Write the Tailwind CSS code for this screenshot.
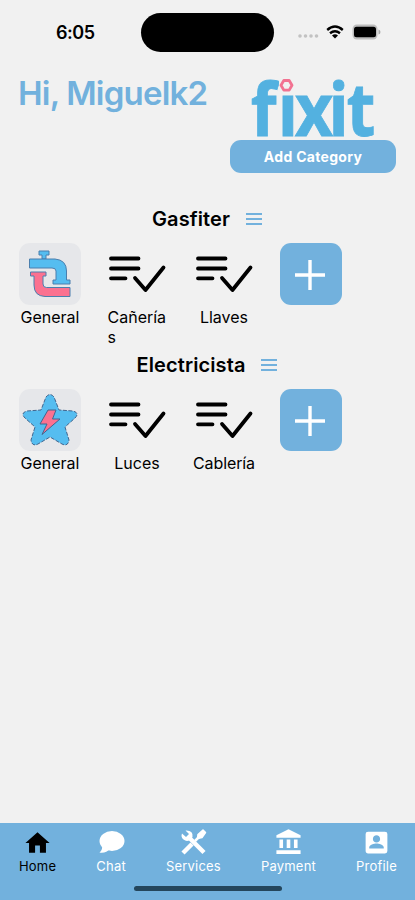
<!DOCTYPE html>
<html lang="es">
<head>
    <meta charset="UTF-8">
    <meta name="viewport" content="width=device-width, initial-scale=1.0">
    <title>Fixit</title>
    <script src="https://cdn.jsdelivr.net/npm/@tailwindcss/browser@4"></script>
</head>
<body class="bg-[#f1f1f1] font-['Inter','Liberation_Sans',sans-serif] text-black">

    <!-- Shared icons -->
    <svg class="hidden">
        <symbol id="checklist" viewBox="0 0 60 40">
            <g fill="none" stroke="#000" stroke-width="3.8" stroke-linecap="round" stroke-linejoin="round">
                <path d="M4 4.500H31.500M4 14.500H31.500M4 24.300H18.500"/>
                <path d="M28 24 38.500 36 56.500 13.500"/>
            </g>
        </symbol>
        <symbol id="menu" viewBox="0 0 18 14">
            <path d="M1 2H17M1 7H17M1 12H17" stroke="#72b1dd" stroke-width="2" fill="none"/>
        </symbol>
        <symbol id="plus" viewBox="0 0 32 32">
            <path d="M16 1V31M1 16H31" stroke="#fff" stroke-width="3.400" fill="none"/>
        </symbol>
    </svg>

    <div class="w-[415px] h-[900px] flex flex-col overflow-hidden">

        <!-- Status bar -->
        <div class="h-[64px] flex items-center shrink-0">
            <span class="w-[141px] pl-[56px] text-[18px] font-semibold tracking-[-0.5px]">6:05</span>
            <div class="w-[133px] h-[39px] rounded-full bg-black"></div>
            <div class="flex items-center pl-[23px]">
                <svg class="w-[22px] h-[6px] mt-[8px]" viewBox="0 0 22 6" fill="#c2c2c2">
                    <circle cx="3" cy="3" r="1.800"/><circle cx="8.500" cy="3" r="1.800"/><circle cx="14" cy="3" r="1.800"/><circle cx="19.500" cy="3" r="1.800"/>
                </svg>
                <svg class="w-[18px] h-[14px] ml-[7px] -mt-[1px]" viewBox="0 0 18 14" fill="none" stroke="#000" stroke-width="2.400">
                    <path d="M1.200 5Q9-1.800 16.800 5"/>
                    <path d="M4 8.300Q9 4.200 14 8.300"/>
                    <path d="M9 13.500 6 10.400Q9 8 12 10.400Z" fill="#000" stroke="none"/>
                </svg>
                <svg class="w-[29px] h-[16px] ml-[8px] -mt-[1px]" viewBox="0 0 29 16">
                    <rect x=".5" y=".5" width="25" height="15" rx="4.500" fill="#bdbdbd"/>
                    <rect x="2" y="2.700" width="22" height="10.500" rx="2.500" fill="#000"/>
                    <path d="M26.500 5.500Q28.500 6 28.500 8T26.500 10.500Z" fill="#aaa"/>
                </svg>
            </div>
        </div>

        <!-- Greeting and logo -->
        <div class="h-[136px] flex justify-between items-start pl-[18px] pr-[19px] shrink-0">
            <h1 class="pt-[9px] text-[33px] leading-[40px] font-semibold text-[#72b1dd] tracking-[-0.8px] whitespace-nowrap">Hi, Miguelk2</h1>
            <div class="w-[166px] flex flex-col items-center pt-[12px]">
                <svg class="w-[166px] h-[64px] overflow-visible" viewBox="0 0 166 64">
                    <text x="23 53 72 109.500 129.500" y="60" transform="scale(.9 1)" font-family="Open Sans" font-weight="700" font-size="74" fill="#53b1e0" stroke="#53b1e0" stroke-width=".8">fixit</text>
                    <rect x="49" y="0" width="17" height="18.500" fill="#f1f1f1"/>
                    <path d="M53.800 4.500H59.200L62 9.300 59.200 14.100H53.800L51 9.300Z" fill="none" stroke="#f27291" stroke-width="2.800" stroke-linejoin="round"/>
                </svg>
                <button class="w-[166px] h-[33px] rounded-[11px] bg-[#72b1dd] text-white text-[14px] font-bold tracking-[0.3px]">Add Category</button>
            </div>
        </div>

        <!-- Gasfiter -->
        <section class="h-[146px] shrink-0">
            <div class="h-[37px] flex items-center justify-center gap-[15px]">
                <h2 class="text-[20px] font-semibold tracking-[0.1px]">Gasfiter</h2>
                <svg class="w-[18px] h-[14px]"><use href="#menu"/></svg>
            </div>
            <div class="flex gap-[25px] pl-[19px] pt-[6px] text-[16px] leading-[20px]">
                <div class="w-[62px] flex flex-col items-center">
                    <div class="size-[62px] rounded-[11px] bg-[#e6e7ea] flex items-center justify-center">
                        <svg class="size-[62px]" viewBox="0 0 62 62" stroke="#4a7fae" stroke-width="1" stroke-linejoin="round">
                            <path d="M20 8H30V12H27V16H23V12H20Z" fill="#55bdf0"/>
                            <path d="M10.500 16H36Q47.500 17 47.500 28V37H51V41H34V37H37V28Q37 25 33 25H10.500Z" fill="#55bdf0"/>
                            <path d="M11.500 29H27V33H24V41Q24 44.500 27.500 44.500H51V53.500H26Q15 53 15 42V33H11.500Z" fill="#fb7190"/>
                        </svg>
                    </div>
                    <span class="mt-[2px]">General</span>
                </div>
                <div class="w-[62px] flex flex-col items-center">
                    <div class="size-[62px] flex items-center justify-center">
                        <svg class="w-[60px] h-[40px] shrink-0"><use href="#checklist"/></svg>
                    </div>
                    <span class="mt-[2px] w-[59px] break-all">Cañerías</span>
                </div>
                <div class="w-[62px] flex flex-col items-center">
                    <div class="size-[62px] flex items-center justify-center">
                        <svg class="w-[60px] h-[40px] shrink-0"><use href="#checklist"/></svg>
                    </div>
                    <span class="mt-[2px]">Llaves</span>
                </div>
                <button class="size-[62px] rounded-[11px] bg-[#72b1dd] flex items-center justify-center pr-[3px] pt-[2px]">
                    <svg class="size-[32px]"><use href="#plus"/></svg>
                </button>
            </div>
        </section>

        <!-- Electricista -->
        <section class="h-[146px] shrink-0">
            <div class="h-[37px] flex items-center justify-center gap-[15px]">
                <h2 class="text-[20px] font-semibold tracking-[0.1px]">Electricista</h2>
                <svg class="w-[18px] h-[14px]"><use href="#menu"/></svg>
            </div>
            <div class="flex gap-[25px] pl-[19px] pt-[6px] text-[16px] leading-[20px]">
                <div class="w-[62px] flex flex-col items-center">
                    <div class="size-[62px] rounded-[11px] bg-[#e6e7ea] flex items-center justify-center">
                        <svg class="size-[62px]" viewBox="0 0 62 62" stroke="#41658e" stroke-width="1" stroke-linejoin="round">
                            <path d="M27 8Q31 3 35 8L40 21 54 22Q61 24 56 29L46 38 50 51Q49 58 43 55L31 48 19 55Q13 58 12 51L16 38 6 29Q1 24 8 22L22 21Z" fill="#55bdf0" stroke-dasharray="4 1.500"/>
                            <path d="M29 21H37L33.500 30H41L23 45.500 28 35H21Z" fill="#fb7190"/>
                        </svg>
                    </div>
                    <span class="mt-[2px]">General</span>
                </div>
                <div class="w-[62px] flex flex-col items-center">
                    <div class="size-[62px] flex items-center justify-center">
                        <svg class="w-[60px] h-[40px] shrink-0"><use href="#checklist"/></svg>
                    </div>
                    <span class="mt-[2px]">Luces</span>
                </div>
                <div class="w-[62px] flex flex-col items-center">
                    <div class="size-[62px] flex items-center justify-center">
                        <svg class="w-[60px] h-[40px] shrink-0"><use href="#checklist"/></svg>
                    </div>
                    <span class="mt-[2px] tracking-[-0.1px]">Cablería</span>
                </div>
                <button class="size-[62px] rounded-[11px] bg-[#72b1dd] flex items-center justify-center pr-[3px] pt-[2px]">
                    <svg class="size-[32px]"><use href="#plus"/></svg>
                </button>
            </div>
        </section>

        <!-- Bottom navigation -->
        <nav class="mt-auto h-[77px] shrink-0 bg-[#72b1dd] text-white text-[13px] leading-[16px] tracking-[0.2px] flex flex-col">
            <div class="h-[63px] flex justify-between pl-[19px] pr-[18px] pt-[5px]">
                <a class="flex flex-col items-center text-black">
                    <svg class="size-[29px]" viewBox="0 0 24 24" fill="currentColor"><path d="M10 20.500v-6h4v6h5v-8h3L12 3.500 2 12.500h3v8z"/></svg>
                    <span class="mt-px">Home</span>
                </a>
                <a class="flex flex-col items-center">
                    <svg class="size-[29px]" viewBox="0 0 29 29" fill="currentColor"><ellipse cx="15" cy="13" rx="12.500" ry="10"/><path d="M5 17Q6 22 2.500 24.500Q9 25.500 13 21Z"/></svg>
                    <span class="mt-px">Chat</span>
                </a>
                <a class="flex flex-col items-center">
                    <svg class="size-[29px]" viewBox="0 0 29 29" fill="none" stroke="currentColor">
                        <path d="M9 8.500 25 24.500" stroke-width="4.500"/>
                        <path d="M4 25 13 16" stroke-width="4.500"/>
                        <path d="M16 13 20 9" stroke-width="2.500"/>
                        <path d="M18.500 10.500 19 6.500 24 2 26.500 4.500 23 9.500Z" fill="currentColor" stroke-width="1.500" stroke-linejoin="round"/>
                        <path d="M6.500 2.500 10 6 7 9 3 5.500Q1.500 9 4.500 11.500Q7.500 14 11 12L13.500 9Q14.500 2 6.500 2.500Z" fill="currentColor" stroke="none"/>
                    </svg>
                    <span class="mt-px">Services</span>
                </a>
                <a class="flex flex-col items-center">
                    <svg class="size-[29px]" viewBox="0 0 24 24" fill="currentColor"><path d="M4.500 9.500v7h3v-7zm6 0v7h3v-7zM2 21.500h20v-3H2zm14.500-12v7h3v-7zM12 1 2 6v2h20V6z"/></svg>
                    <span class="mt-px">Payment</span>
                </a>
                <a class="flex flex-col items-center">
                    <svg class="size-[29px]" viewBox="0 0 24 24" fill="currentColor"><path d="M19 3H5a2 2 0 0 0-2 2v14c0 1.100.9 2 2 2h14a2 2 0 0 0 2-2V5a2 2 0 0 0-2-2zm-7 3c1.660 0 3 1.340 3 3s-1.340 3-3 3-3-1.340-3-3 1.340-3 3-3zm6 11H6v-1c0-2 4-3.100 6-3.100s6 1.100 6 3.100v1z"/></svg>
                    <span class="mt-px">Profile</span>
                </a>
            </div>
            <div class="mx-auto w-[148px] h-[5px] rounded-full bg-[#24465c]"></div>
        </nav>
    </div>

</body>
</html>
